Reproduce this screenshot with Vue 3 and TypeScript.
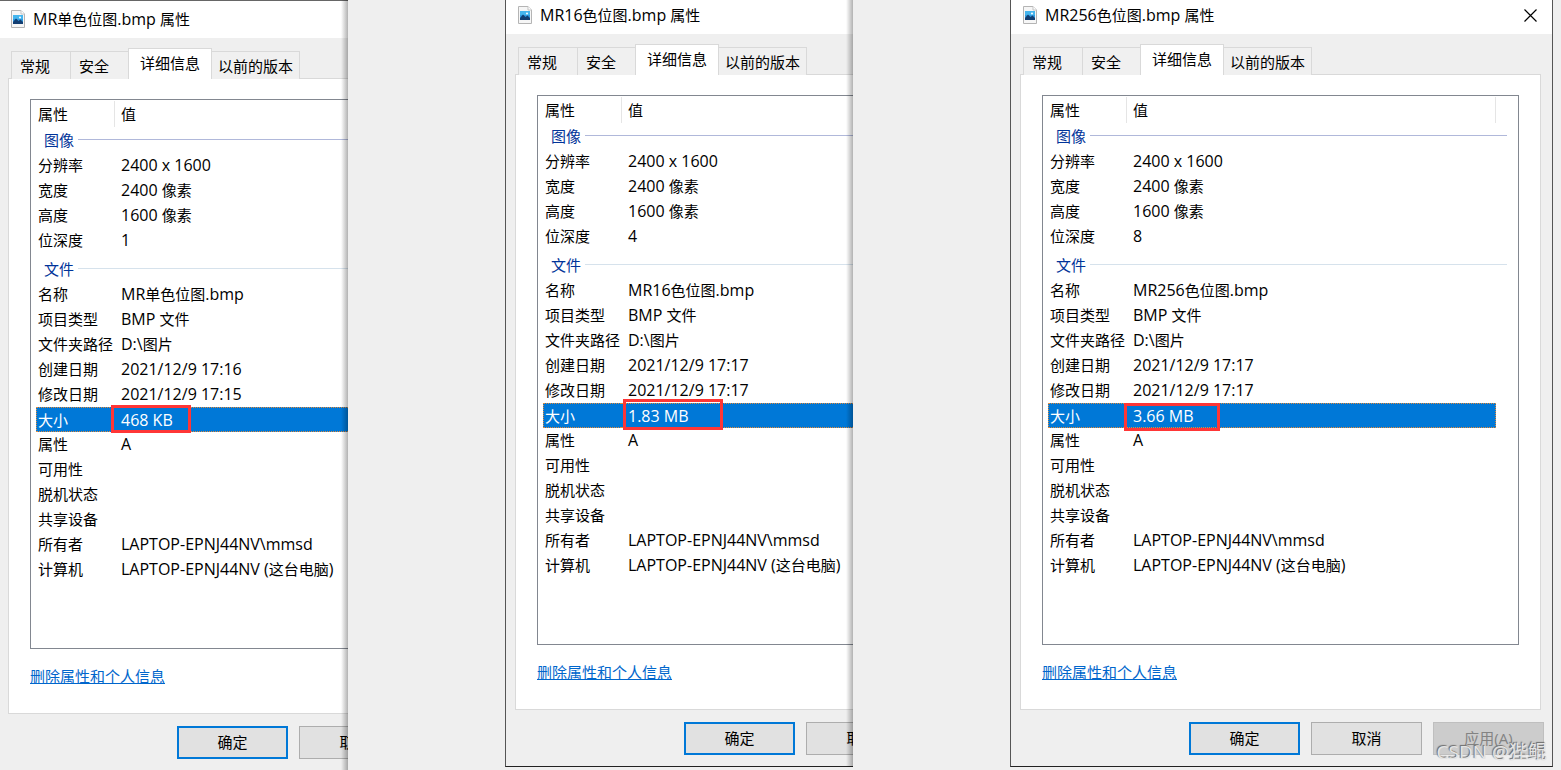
<script setup lang="ts">
import { h, type FunctionalComponent } from 'vue'

interface Row {
  name: string
  value?: string
  marked?: boolean
}

interface Group {
  title: string
  rows: Row[]
}

interface Dialog {
  id: string
  file: string
  cropped: boolean
  groups: Group[]
}

const tabs = ['常规', '安全', '详细信息', '以前的版本']
const activeTab = '详细信息'

function makeDialog(
  id: string,
  file: string,
  depth: string,
  size: string,
  created: string,
  modified: string,
  cropped: boolean,
): Dialog {
  return {
    id,
    file,
    cropped,
    groups: [
      {
        title: '图像',
        rows: [
          { name: '分辨率', value: '2400 x 1600' },
          { name: '宽度', value: '2400 像素' },
          { name: '高度', value: '1600 像素' },
          { name: '位深度', value: depth },
        ],
      },
      {
        title: '文件',
        rows: [
          { name: '名称', value: file },
          { name: '项目类型', value: 'BMP 文件' },
          { name: '文件夹路径', value: 'D:\\图片' },
          { name: '创建日期', value: created },
          { name: '修改日期', value: modified },
          { name: '大小', value: size, marked: true },
          { name: '属性', value: 'A' },
          { name: '可用性' },
          { name: '脱机状态' },
          { name: '共享设备' },
          { name: '所有者', value: 'LAPTOP-EPNJ44NV\\mmsd' },
          { name: '计算机', value: 'LAPTOP-EPNJ44NV (这台电脑)' },
        ],
      },
    ],
  }
}

const dialogs: Dialog[] = [
  makeDialog('mono', 'MR单色位图.bmp', '1', '468 KB', '2021/12/9 17:16', '2021/12/9 17:15', true),
  makeDialog('c16', 'MR16色位图.bmp', '4', '1.83 MB', '2021/12/9 17:17', '2021/12/9 17:17', true),
  makeDialog('c256', 'MR256色位图.bmp', '8', '3.66 MB', '2021/12/9 17:17', '2021/12/9 17:17', false),
]

// Latin runs are set one size larger than the Chinese text around them.
const MixedText: FunctionalComponent<{ text: string }> = (props) =>
  h(
    'span',
    { class: 'mixed' },
    props.text
      .split(/([\u4e00-\u9fff]+)/)
      .filter((part) => part !== '')
      .map((part) => (/[\u4e00-\u9fff]/.test(part) ? part : h('span', { class: 'latin' }, part))),
  )
MixedText.props = ['text']
</script>

<template>
  <main class="page">
    <section v-for="d in dialogs" :key="d.id" class="shot" :class="[d.id, { cropped: d.cropped }]">
      <div class="dialog">
        <header class="titlebar">
          <svg class="file-icon" viewBox="0 0 14 18" width="14" height="18" aria-hidden="true">
            <path d="M.5 .5H10L13.500 4V17.500H.5Z" fill="#f6f6f6" stroke="#b4b4b4" />
            <path d="M10 .5V4H13.500" fill="#fff" stroke="#c4c4c4" />
            <rect x="2" y="5" width="10" height="9" fill="#2f9be0" />
            <rect x="2" y="5" width="10" height="4" fill="#45b5ee" />
            <path d="M2 12L5 8.500L7.500 11L9.500 9.500L12 12V14H2Z" fill="#123e72" />
            <circle cx="9" cy="7.500" r="1" fill="#fff" />
          </svg>
          <h1 class="title"><MixedText :text="d.file + ' '" /><span>属性</span></h1>
          <button class="close" type="button" aria-label="关闭">
            <svg viewBox="0 0 13 13" width="13" height="13" aria-hidden="true">
              <path d="M.5 .5L12.500 12.500M12.500 .5L.5 12.500" stroke="#000" stroke-width="1.200" fill="none" />
            </svg>
          </button>
        </header>

        <nav class="tabs" role="tablist">
          <button
            v-for="t in tabs"
            :key="t"
            class="tab"
            :class="{ active: t === activeTab }"
            type="button"
            role="tab"
            :aria-selected="t === activeTab"
          >
            {{ t }}
          </button>
        </nav>

        <div class="panel">
          <div class="list">
            <table>
              <colgroup>
                <col class="col-name" />
                <col />
                <col class="col-end" />
              </colgroup>
              <thead>
                <tr>
                  <th scope="col"><span class="head">属性</span></th>
                  <th scope="col"><span class="head">值</span></th>
                  <td></td>
                </tr>
              </thead>
              <tbody v-for="g in d.groups" :key="g.title">
                <tr class="group">
                  <th colspan="3" scope="rowgroup">
                    <span class="group-line">{{ g.title }}</span>
                  </th>
                </tr>
                <tr v-for="r in g.rows" :key="r.name" :class="{ selected: r.marked }">
                  <th scope="row">{{ r.name }}</th>
                  <td>
                    <MixedText v-if="r.value" :text="r.value" />
                    <span v-if="r.marked" class="marker"></span>
                  </td>
                  <td></td>
                </tr>
              </tbody>
            </table>
          </div>
          <a class="remove" href="#">删除属性和个人信息</a>
        </div>

        <footer class="buttons">
          <button class="btn primary" type="button">确定</button>
          <button class="btn" type="button">取消</button>
          <button class="btn" type="button" disabled>应用(A)</button>
        </footer>
      </div>
    </section>
    <div class="watermark">CSDN @狴鲲</div>
  </main>
</template>

<style>
body {
  margin: 0;
  background: #efefef;
}
.mixed {
  white-space: pre;
}
.mixed .latin {
  font-size: 16px;
}
</style>

<style scoped>
.page {
  position: relative;
  display: grid;
  grid-template-columns: 348fr 348fr 543fr;
  column-gap: 157px;
  align-items: start;
  box-sizing: border-box;
  min-height: 100vh;
  padding-right: 8px;
  overflow: hidden;
  background: #efefef;
  color: #000;
  font-family: 'Open Sans', 'Noto Sans CJK SC', sans-serif;
  font-size: 15px;
  line-height: 24px;
}
.shot {
  position: relative;
  min-width: 0;
  overflow: hidden;
}
.shot.cropped::after {
  content: '';
  position: absolute;
  inset: 0 0 0 auto;
  width: 7px;
  background: linear-gradient(to right, rgba(0, 0, 0, 0), rgba(0, 0, 0, 0.3));
}
.dialog {
  box-sizing: border-box;
  min-width: 543px;
  border: 1px solid #555;
  border-top: 0;
  border-bottom-color: #222;
  background: #efefef;
}
.mono .dialog {
  border-top: 1px solid #666;
  border-left: 0;
  border-bottom: 0;
  min-width: 541px;
}
.titlebar {
  display: flex;
  align-items: center;
  box-sizing: border-box;
  height: 34px;
  padding: 0 15px 4px 12px;
  background: #fff;
}
.mono .titlebar {
  height: 37px;
  padding: 0 15px 2px 11px;
}
.file-icon {
  flex: none;
}
.title {
  flex: 1;
  margin: 0 0 0 8px;
  font-size: 15px;
  font-weight: 400;
  line-height: 24px;
  white-space: nowrap;
}
.close {
  display: flex;
  padding: 0;
  border: 0;
  background: none;
}
.tabs {
  display: flex;
  align-items: flex-end;
  height: 31px;
  margin-top: 10px;
  padding-left: 12px;
}
.mono .tabs {
  padding-left: 11px;
}
.tab {
  box-sizing: border-box;
  height: 28px;
  padding: 1px 19px 0 8px;
  border: 1px solid #d9d9d9;
  border-right-width: 0;
  border-bottom: 0;
  background: #f0f0f0;
  color: #000;
  font: inherit;
  white-space: nowrap;
}
.tab:first-child {
  padding-right: 20px;
}
.tab:last-child {
  border-left: 0;
  border-right-width: 1px;
  padding: 1px 6px 0;
}
.tab.active {
  position: relative;
  height: 31px;
  padding: 0 11px 2px;
  border-right-width: 1px;
  background: #fff;
}
.panel {
  margin: -1px 11px 0 9px;
  padding: 20px 21px 25px;
  border: 1px solid #d9d9d9;
  background: #fff;
}
.mono .panel {
  margin-left: 8px;
}
.list {
  box-sizing: border-box;
  height: 550px;
  padding-left: 5px;
  padding-right: 11px;
  border: 1px solid #828790;
}
table {
  width: 100%;
  border-collapse: separate;
  border-spacing: 0;
  table-layout: fixed;
}
.col-name {
  width: 78px;
}
.col-end {
  width: 11px;
}
th,
td {
  box-sizing: border-box;
  height: 25px;
  padding: 0;
  font-weight: 400;
  line-height: 22px;
  text-align: left;
  white-space: nowrap;
  vertical-align: middle;
}
tbody th,
tbody td {
  padding-bottom: 2px;
}
tbody tr > :first-child {
  padding-left: 2px;
}
tbody td:nth-child(2) {
  position: relative;
  padding-left: 7px;
}
tbody .mixed {
  display: block;
  height: 22px;
}
thead th {
  height: 28px;
}
.head {
  display: block;
  height: 26px;
  margin-right: -1px;
  padding-left: 2px;
  border-right: 1px solid #e5e5e5;
  line-height: 26px;
}
th + th .head {
  margin-right: 0;
  padding-left: 7px;
}
.group th {
  color: #003399;
}
tbody .group > :first-child {
  padding-left: 8px;
}
tbody + tbody .group th {
  height: 29px;
  padding-top: 4px;
}
.group-line {
  display: flex;
  align-items: center;
  gap: 4px;
  line-height: 20px;
}
.group-line::after {
  content: '';
  flex: 1;
  height: 1px;
  background: #b0b8da;
}
tbody + tbody .group-line::after {
  background: #d6e2ec;
}
tbody .selected th,
tbody .selected td:nth-child(2) {
  padding-bottom: 0;
  border: 1px dotted #e08a3c;
  background: #0078d7;
  color: #fff;
}
.selected th {
  border-right: 0;
}
tbody .selected > :first-child {
  padding-left: 1px;
  border-right: 0;
}
tbody .selected td:nth-child(2) {
  border-left: 0;
}
.marker {
  position: absolute;
  box-sizing: border-box;
  top: -3px;
  left: -3px;
  width: 80px;
  height: 28px;
  border: 3px solid #ff3636;
}
.c16 .marker {
  top: -5px;
  left: 2px;
  width: 100px;
  height: 31px;
}
.c256 .marker {
  top: -1px;
  left: -2px;
  width: 96px;
  height: 28px;
}
.remove {
  display: block;
  width: max-content;
  margin-top: 15px;
  color: #0066cc;
  text-decoration: underline;
}
.buttons {
  display: flex;
  justify-content: flex-end;
  gap: 11px;
  padding: 12px 8px 11px;
}
.mono .buttons {
  padding-bottom: 12px;
}
.btn {
  box-sizing: border-box;
  width: 111px;
  height: 33px;
  padding: 0 0 2px;
  border: 1px solid #adadad;
  background: #e1e1e1;
  color: #000;
  font: inherit;
}
.btn.primary {
  border: 2px solid #0078d7;
}
.btn:disabled {
  border-color: #bfbfbf;
  background: #cccccc;
  color: #838383;
}
.watermark {
  position: absolute;
  right: 14px;
  bottom: 6px;
  color: #e4e4e4;
  font-size: 19px;
  line-height: 26px;
  text-shadow: -1px -1px 1px #666;
}
</style>
